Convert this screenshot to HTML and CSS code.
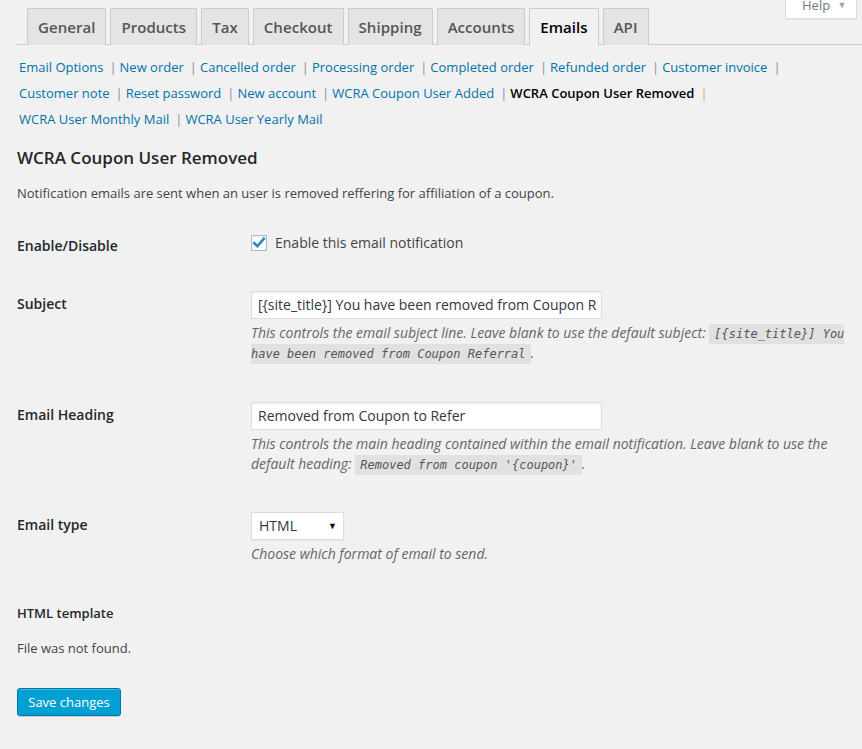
FILE: index.html
```html
<!DOCTYPE html>
<html>
<head>
<meta charset="utf-8">
<link rel="stylesheet" href="styles.css">
</head>
<body>
<div class="help-tab">Help <span class="help-arrow">▼</span></div>
<div class="wrap">
  <nav class="nav-tabs">
    <a class="nav-tab">General</a>
    <a class="nav-tab">Products</a>
    <a class="nav-tab">Tax</a>
    <a class="nav-tab">Checkout</a>
    <a class="nav-tab">Shipping</a>
    <a class="nav-tab">Accounts</a>
    <a class="nav-tab active">Emails</a>
    <a class="nav-tab">API</a>
  </nav>
  <ul class="subsub">
    <li><a>Email Options</a><span class="sep">|</span></li>
    <li><a>New order</a><span class="sep">|</span></li>
    <li><a>Cancelled order</a><span class="sep">|</span></li>
    <li><a>Processing order</a><span class="sep">|</span></li>
    <li><a>Completed order</a><span class="sep">|</span></li>
    <li><a>Refunded order</a><span class="sep">|</span></li>
    <li><a>Customer invoice</a><span class="sep">|</span></li>
    <li><a>Customer note</a><span class="sep">|</span></li>
    <li><a>Reset password</a><span class="sep">|</span></li>
    <li><a>New account</a><span class="sep">|</span></li>
    <li><a>WCRA Coupon User Added</a><span class="sep">|</span></li>
    <li><a class="current">WCRA Coupon User Removed</a><span class="sep sep-current">|</span></li>
    <li><a>WCRA User Monthly Mail</a><span class="sep">|</span></li>
    <li><a>WCRA User Yearly Mail</a></li>
  </ul>
  <h2 class="title">WCRA Coupon User Removed</h2>
  <p class="intro">Notification emails are sent when an user is removed reffering for affiliation of a coupon.</p>

  <div class="form-table">
    <div class="row row-check">
      <div class="th">Enable/Disable</div>
      <div class="td">
        <label class="check-label"><span class="checkbox"><svg width="14" height="14" viewBox="0 0 14 14"><path d="M2.3 7.2 L5.4 10.2 L11.8 2.8" fill="none" stroke="#1e8cbe" stroke-width="2.6" stroke-linecap="square"/></svg></span>Enable this email notification</label>
      </div>
    </div>
    <div class="row">
      <div class="th th-input">Subject</div>
      <div class="td">
        <div class="input">[{site_title}] You have been removed from Coupon R</div>
        <p class="desc">This controls the email subject line. Leave blank to use the default subject: <code>[{site_title}] You have been removed from Coupon Referral</code>.</p>
      </div>
    </div>
    <div class="row">
      <div class="th th-input">Email Heading</div>
      <div class="td">
        <div class="input">Removed from Coupon to Refer</div>
        <p class="desc">This controls the main heading contained within the email notification. Leave blank to use the default heading: <code>Removed from coupon '{coupon}'</code>.</p>
      </div>
    </div>
    <div class="row row-type">
      <div class="th th-input">Email type</div>
      <div class="td">
        <div class="select">HTML<span class="select-arrow">▼</span></div>
        <p class="desc">Choose which format of email to send.</p>
      </div>
    </div>
  </div>

  <h3 class="sub-title">HTML template</h3>
  <p class="plain">File was not found.</p>
  <div class="submit"><button class="button-primary">Save changes</button></div>
</div>
</body>
</html>
```
FILE: styles.css
```css
html, body {
  margin: 0;
  padding: 0;
  background: #f1f1f1;
}
body {
  font-family: "Open Sans", "Noto Sans", sans-serif;
  font-size: 13px;
  color: #444;
  position: relative;
  height: 749px;
  overflow: hidden;
}
.help-tab {
  position: absolute;
  top: -1px;
  right: 5px;
  width: 72px;
  height: 20px;
  box-sizing: border-box;
  background: #fff;
  border: 1px solid #ddd;
  border-top: none;
  box-shadow: 0 1px 1px rgba(0,0,0,0.04);
  color: #72777c;
  font-size: 13px;
  line-height: 12px;
  padding-left: 16px;
}
.help-arrow {
  font-size: 9px;
  color: #a0a5aa;
  margin-left: 4px;
  vertical-align: 2px;
}
.wrap {
  padding: 8px 0 0 17px;
}
.nav-tabs {
  display: flex;
  border-bottom: 1px solid #ccc;
  padding-left: 10px;
  gap: 4px;
  height: 36px;
}
.nav-tab {
  display: block;
  box-sizing: border-box;
  height: 37px;
  border: 1px solid #ccc;
  border-bottom: none;
  background: #e4e4e4;
  color: #555;
  font-size: 15px;
  font-weight: 600;
  letter-spacing: 0.05px;
  line-height: 36px;
  padding: 0 10px;
}
.nav-tab.active {
  background: #f1f1f1;
  color: #000;
  height: 38px;
}
.subsub {
  list-style: none;
  margin: 9px 0 0 0;
  padding: 0 0 0 2px;
  display: flex;
  flex-wrap: wrap;
  width: 815px;
  line-height: 26px;
}
.subsub li {
  white-space: nowrap;
}
.subsub a {
  color: #0073aa;
}
.subsub a.current {
  color: #000;
  font-weight: 600;
}
.sep {
  color: #8a8a9a;
  margin: 0 3px 0 6px;
}
.sep-current {
  color: #d9a35f;
}
.title {
  font-size: 17px;
  font-weight: 600;
  color: #23282d;
  margin: 14px 0 0 0;
  line-height: 24px;
}
.intro {
  margin: 13px 0 0 0;
  line-height: 20px;
}
.form-table {
  margin-top: 10px;
}
.row {
  display: grid;
  grid-template-columns: 234px 600px;
  padding: 19px 0 20px;
}
.row-check {
  padding-bottom: 16px;
}
.row-type {
  padding-top: 18px;
}
.th {
  font-weight: 600;
  color: #23282d;
  font-size: 14px;
  line-height: 20px;
}
.th-input {
  padding-top: 3px;
}
.row-check .th {
  padding-top: 4px;
}
.check-label {
  display: flex;
  align-items: center;
  height: 21px;
  color: #444;
  font-size: 14px;
  line-height: 20px;
}
.checkbox {
  display: inline-flex;
  align-items: center;
  justify-content: center;
  width: 16px;
  height: 16px;
  box-sizing: border-box;
  background: #fff;
  border: 1px solid #b4b9be;
  box-shadow: inset 0 1px 2px rgba(0,0,0,0.1);
  margin-right: 8px;
}
.input {
  width: 351px;
  height: 28px;
  box-sizing: border-box;
  background: #fff;
  border: 1px solid #ddd;
  box-shadow: inset 0 1px 2px rgba(0,0,0,0.07);
  color: #32373c;
  font-size: 14px;
  line-height: 26px;
  padding: 0 6px;
  white-space: nowrap;
  overflow: hidden;
}
.desc {
  margin: 4px 0 0 0;
  font-style: italic;
  color: #666;
  font-size: 14px;
  line-height: 20px;
}
code {
  font-family: "DejaVu Sans Mono", "Liberation Mono", monospace;
  font-size: 12px;
  line-height: 14px;
  font-style: italic;
  background: #e1e1e1;
  color: #555;
  padding: 3px 5px 3px;
}
.select {
  position: relative;
  width: 93px;
  height: 28px;
  box-sizing: border-box;
  background: #fff;
  border: 1px solid #ddd;
  box-shadow: 0 1px 1px rgba(0,0,0,0.05);
  color: #32373c;
  font-size: 14px;
  line-height: 26px;
  padding: 0 7px;
}
.select-arrow {
  position: absolute;
  right: 6px;
  top: 0;
  font-size: 9px;
  color: #000;
}
.sub-title {
  margin: 19px 0 0 0;
  font-size: 13px;
  font-weight: 600;
  color: #23282d;
  line-height: 20px;
}
.plain {
  margin: 15px 0 0 0;
  line-height: 20px;
}
.submit {
  margin-top: 30px;
}
.button-primary {
  display: block;
  height: 28px;
  box-sizing: border-box;
  background: #00a0d2;
  border: 1px solid #0073aa;
  border-radius: 3px;
  box-shadow: inset 0 1px 0 rgba(120,200,230,0.5), 0 1px 0 rgba(0,0,0,0.15);
  color: #fff;
  font-family: "Open Sans", sans-serif;
  font-size: 13px;
  line-height: 26px;
  padding: 0 10px;
  width: 104px;
}
```
